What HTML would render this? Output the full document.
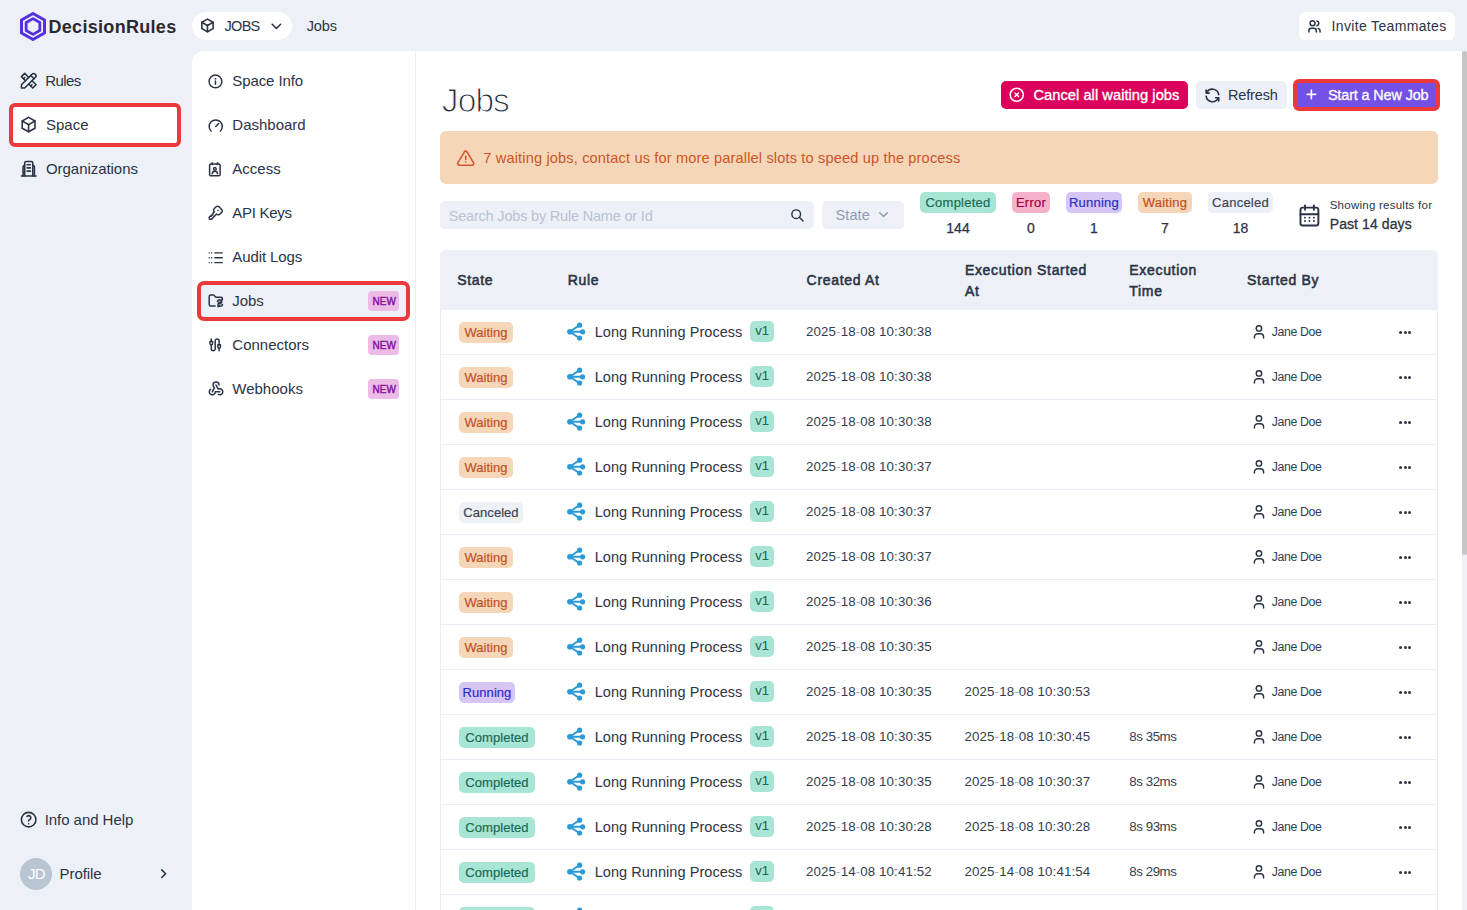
<!DOCTYPE html>
<html><head><meta charset="utf-8"><title>Jobs - DecisionRules</title>
<style>
html,body{margin:0;padding:0}
body{width:1467px;height:910px;overflow:hidden;background:#EDF0F7;position:relative;font-family:"Liberation Sans", sans-serif;-webkit-font-smoothing:antialiased}
.box{position:absolute;box-sizing:border-box}
.t{position:absolute;white-space:nowrap;line-height:1}
svg{overflow:visible}
</style></head><body>
<svg style="position:absolute;left:20px;top:12px" width="26" height="29" viewBox="0 0 26 29"><polygon points="13,1.5 24.5,8 24.5,21 13,27.5 1.5,21 1.5,8" fill="none" stroke="#5530E2" stroke-width="3" stroke-linejoin="round"/><polygon points="13,6.6 19.84,10.55 19.84,18.45 13,22.4 6.16,18.45 6.16,10.55" fill="none" stroke="#5530E2" stroke-width="2.8" stroke-linejoin="round"/></svg>
<div class="t" style="left:48.5px;top:18px;font-size:18px;color:#2A2A2E;font-weight:700;letter-spacing:0.3px;">DecisionRules</div>
<div class="box" style="left:192px;top:12px;width:100px;height:28px;border-radius:14px;background:#fff"></div>
<svg style="position:absolute;left:198.68px;top:17.38px" width="16.93" height="16.93" viewBox="0 0 24 24" fill="none" stroke="#2B3445" stroke-width="2.268" stroke-linecap="round" stroke-linejoin="round"><path d="M12 3l8 4.5l0 9l-8 4.5l-8 -4.5l0 -9l8 -4.5"/><path d="M12 12l8 -4.5"/><path d="M12 12l0 9"/><path d="M12 12l-8 -4.5"/></svg>
<div class="t" style="left:224.5px;top:19px;font-size:14.5px;color:#2B3445;font-weight:400;letter-spacing:-0.7px;">JOBS</div>
<svg style="position:absolute;left:267.60px;top:17.50px" width="16.80" height="16.80" viewBox="0 0 24 24" fill="none" stroke="#2B3445" stroke-width="2.286" stroke-linecap="round" stroke-linejoin="round"><path d="M6 9l6 6l6 -6"/></svg>
<div class="t" style="left:306.7px;top:19px;font-size:14.5px;color:#2B3445;font-weight:400;letter-spacing:-0.1px;">Jobs</div>
<div class="box" style="left:1299px;top:12px;width:156px;height:28px;border-radius:6px;background:#fff"></div>
<svg style="position:absolute;left:1306.78px;top:18.78px" width="14.93" height="14.93" viewBox="0 0 24 24" fill="none" stroke="#2B3445" stroke-width="2.411" stroke-linecap="round" stroke-linejoin="round"><path d="M9 7m-4 0a4 4 0 1 0 8 0a4 4 0 1 0 -8 0"/><path d="M3 21v-2a4 4 0 0 1 4 -4h4a4 4 0 0 1 4 4v2"/><path d="M16 3.13a4 4 0 0 1 0 7.75"/><path d="M21 21v-2a4 4 0 0 0 -3 -3.85"/></svg>
<div class="t" style="left:1331.6px;top:19px;font-size:14px;color:#2B3445;font-weight:400;letter-spacing:0.34px;">Invite Teammates</div>
<div class="box" style="left:9px;top:103px;width:172px;height:44px;border:4px solid #EE393C;border-radius:6px;background:#fff"></div>
<svg style="position:absolute;left:19.07px;top:71.47px" width="19.47" height="19.47" viewBox="0 0 24 24" fill="none" stroke="#2B3445" stroke-width="1.973" stroke-linecap="round" stroke-linejoin="round"><path d="M3 21h4l13 -13a1.5 1.5 0 0 0 -4 -4l-13 13v4"/><path d="M14.5 5.5l4 4"/><path d="M12 8l-5 -5l-4 4l5 5"/><path d="M7 8l-1.5 1.5"/><path d="M16 12l5 5l-4 4l-5 -5"/><path d="M16 17l-1.5 1.5"/></svg>
<div class="t" style="left:45.2px;top:73px;font-size:15px;color:#2B3445;font-weight:400;letter-spacing:-0.6px;">Rules</div>
<svg style="position:absolute;left:19.00px;top:115.30px" width="19.20" height="19.20" viewBox="0 0 24 24" fill="none" stroke="#2B3445" stroke-width="2.000" stroke-linecap="round" stroke-linejoin="round"><path d="M12 3l8 4.5l0 9l-8 4.5l-8 -4.5l0 -9l8 -4.5"/><path d="M12 12l8 -4.5"/><path d="M12 12l0 9"/><path d="M12 12l-8 -4.5"/></svg>
<div class="t" style="left:46px;top:117px;font-size:15px;color:#2B3445;font-weight:400;letter-spacing:0px;">Space</div>
<svg style="position:absolute;left:19.07px;top:159.07px" width="19.47" height="19.47" viewBox="0 0 24 24" fill="none" stroke="#2B3445" stroke-width="1.973" stroke-linecap="round" stroke-linejoin="round"><path d="M5 21v-11a2 2 0 0 1 2 -2h0"/><path d="M19 21v-11a2 2 0 0 0 -2 -2h0"/><path d="M7 21v-16a2 2 0 0 1 2 -2h6a2 2 0 0 1 2 2v16"/><path d="M3 21h18"/><path d="M10 7h4"/><path d="M10 11h4"/><path d="M10 15h4"/></svg>
<div class="t" style="left:46px;top:161px;font-size:15px;color:#2B3445;font-weight:400;letter-spacing:-0.05px;">Organizations</div>
<svg style="position:absolute;left:19.08px;top:809.99px" width="19.33" height="19.33" viewBox="0 0 24 24" fill="none" stroke="#2B3445" stroke-width="1.986" stroke-linecap="round" stroke-linejoin="round"><path d="M12 12m-9 0a9 9 0 1 0 18 0a9 9 0 1 0 -18 0"/><path d="M12 17l0 .01"/><path d="M12 13.5a1.5 1.5 0 0 1 1 -1.5a2.6 2.6 0 1 0 -3 -4"/></svg>
<div class="t" style="left:44.7px;top:812px;font-size:15px;color:#2B3445;font-weight:400;letter-spacing:-0.05px;">Info and Help</div>
<div class="box" style="left:20px;top:858px;width:32px;height:32px;border-radius:50%;background:#B9C5D3"></div>
<div class="t" style="left:28px;top:866px;font-size:15px;color:#fff;font-weight:400;letter-spacing:-0.8px;">JD</div>
<div class="t" style="left:59.6px;top:866px;font-size:15px;color:#2B3445;font-weight:400;letter-spacing:-0.1px;">Profile</div>
<svg style="position:absolute;left:155.93px;top:866.45px" width="15.40" height="15.40" viewBox="0 0 24 24" fill="none" stroke="#2B3445" stroke-width="2.494" stroke-linecap="round" stroke-linejoin="round"><path d="M9 6l6 6l-6 6"/></svg>
<div class="box" style="left:192px;top:51px;width:224px;height:859px;background:#fff;border-top-left-radius:12px;border-right:1px solid #ECEFF6"></div>
<div class="box" style="left:197px;top:280.5px;width:213px;height:40px;border:4px solid #EE393C;border-radius:7px;background:#EDF0F7"></div>
<svg style="position:absolute;left:207.03px;top:72.63px" width="16.93" height="16.93" viewBox="0 0 24 24" fill="none" stroke="#2B3445" stroke-width="2.126" stroke-linecap="round" stroke-linejoin="round"><path d="M3 12a9 9 0 1 0 18 0a9 9 0 0 0 -18 0"/><path d="M11.6 8.2h.8"/><path d="M12 11.5v4.5"/></svg>
<div class="t" style="left:232.3px;top:73px;font-size:15px;color:#2B3445;font-weight:400;letter-spacing:-0.1px;">Space Info</div>
<svg style="position:absolute;left:206.97px;top:117.34px" width="17.47" height="17.47" viewBox="0 0 24 24" fill="none" stroke="#2B3445" stroke-width="2.061" stroke-linecap="round" stroke-linejoin="round"><path d="M5.636 19.364a9 9 0 1 1 12.728 0"/><path d="M16 9l-4 4"/></svg>
<div class="t" style="left:232.3px;top:117px;font-size:15px;color:#2B3445;font-weight:400;letter-spacing:0px;">Dashboard</div>
<svg style="position:absolute;left:206.53px;top:161.79px" width="15.72" height="15.72" viewBox="0 0 24 24" fill="none" stroke="#2B3445" stroke-width="2.290" stroke-linecap="round" stroke-linejoin="round"><path d="M4 5a2 2 0 0 1 2 -2h12a2 2 0 0 1 2 2v14a2 2 0 0 1 -2 2h-12a2 2 0 0 1 -2 -2z"/><path d="M8 1v3"/><path d="M16 1v3"/><path d="M12 10.5m-2 0a2 2 0 1 0 4 0a2 2 0 1 0 -4 0"/><path d="M8 18a4 4 0 0 1 8 0"/></svg>
<div class="t" style="left:232.3px;top:161px;font-size:15px;color:#2B3445;font-weight:400;letter-spacing:0px;">Access</div>
<svg style="position:absolute;left:206.97px;top:204.07px" width="17.47" height="17.47" viewBox="0 0 24 24" fill="none" stroke="#2B3445" stroke-width="2.061" stroke-linecap="round" stroke-linejoin="round"><path d="M16.555 3.843l3.602 3.602a2.877 2.877 0 0 1 0 4.069l-2.643 2.643a2.877 2.877 0 0 1 -4.069 0l-.301 -.301l-6.558 6.558a2 2 0 0 1 -1.239 .578l-.175 .008h-1.172a1 1 0 0 1 -.993 -.883l-.007 -.117v-1.172a2 2 0 0 1 .467 -1.284l.119 -.13l.414 -.414h2v-2h2v-2l2.144 -2.144l-.301 -.301a2.877 2.877 0 0 1 0 -4.069l2.643 -2.643a2.877 2.877 0 0 1 4.069 0z"/><path d="M15 9h.01"/></svg>
<div class="t" style="left:232.3px;top:205px;font-size:15px;color:#2B3445;font-weight:400;letter-spacing:-0.3px;">API Keys</div>
<svg style="position:absolute;left:206.00px;top:247.57px" width="19.50" height="19.50" viewBox="0 0 24 24" fill="none" stroke="#2B3445" stroke-width="1.846" stroke-linecap="round" stroke-linejoin="round"><path d="M11 6h9"/><path d="M11 12h9"/><path d="M11 18h9"/><path d="M4 6h.01"/><path d="M7 6h.01"/><path d="M4 12h.01"/><path d="M7 12h.01"/><path d="M4 18h.01"/><path d="M7 18h.01"/></svg>
<div class="t" style="left:232.3px;top:249px;font-size:15px;color:#2B3445;font-weight:400;letter-spacing:-0.1px;">Audit Logs</div>
<svg style="position:absolute;left:207.04px;top:292.10px" width="17.70" height="17.70" viewBox="0 0 24 24" fill="none" stroke="#2B3445" stroke-width="2.034" stroke-linecap="round" stroke-linejoin="round"><path d="M11 19h-6a2 2 0 0 1 -2 -2v-11a2 2 0 0 1 2 -2h4l3 3h7a2 2 0 0 1 2 2v1"/><path d="M14 13a3 3 0 0 1 5 -1.5l1 -1.5v4h-4"/><path d="M21 17a3 3 0 0 1 -5 1.5l-1 1.5v-4h4"/></svg>
<div class="t" style="left:232.3px;top:293px;font-size:15px;color:#2B3445;font-weight:400;letter-spacing:-0.1px;">Jobs</div>
<svg style="position:absolute;left:207.58px;top:336.98px" width="15.73" height="15.73" viewBox="0 0 24 24" fill="none" stroke="#2B3445" stroke-width="2.288" stroke-linecap="round" stroke-linejoin="round"><path d="M5 3v4"/><path d="M3 7h4v3a2 2 0 0 1 -4 0z"/><path d="M5 12v6a3 3 0 0 0 3 3h0a3 3 0 0 0 3 -3v-12a3 3 0 0 1 3 -3h0a3 3 0 0 1 3 3v6"/><path d="M15 12h4v3a2 2 0 0 1 -4 0z"/><path d="M17 17v4"/></svg>
<div class="t" style="left:232.3px;top:337px;font-size:15px;color:#2B3445;font-weight:400;letter-spacing:0px;">Connectors</div>
<svg style="position:absolute;left:207.29px;top:379.34px" width="18.07" height="18.07" viewBox="0 0 24 24" fill="none" stroke="#2B3445" stroke-width="1.992" stroke-linecap="round" stroke-linejoin="round"><path d="M4.876 13.61a4 4 0 1 0 6.124 3.39h6"/><path d="M15.066 20.502a4 4 0 1 0 1.934 -7.502c-.706 0 -1.424 .179 -2 .5l-3 -5.5"/><path d="M16 8a4 4 0 1 0 -8 0c0 1.506 .77 2.818 2 3.5l-3 5.5"/></svg>
<div class="t" style="left:232.3px;top:381px;font-size:15px;color:#2B3445;font-weight:400;letter-spacing:0px;">Webhooks</div>
<div class="box" style="left:368px;top:291px;width:31px;height:20px;border-radius:4px;background:#ECBBE6"></div>
<div class="t" style="left:372.6px;top:297px;font-size:10px;color:#80109E;font-weight:400;letter-spacing:0.05px;-webkit-text-stroke:0.4px #80109E">NEW</div>
<div class="box" style="left:368px;top:335px;width:31px;height:20px;border-radius:4px;background:#ECBBE6"></div>
<div class="t" style="left:372.6px;top:341px;font-size:10px;color:#80109E;font-weight:400;letter-spacing:0.05px;-webkit-text-stroke:0.4px #80109E">NEW</div>
<div class="box" style="left:368px;top:379px;width:31px;height:20px;border-radius:4px;background:#ECBBE6"></div>
<div class="t" style="left:372.6px;top:385px;font-size:10px;color:#80109E;font-weight:400;letter-spacing:0.05px;-webkit-text-stroke:0.4px #80109E">NEW</div>
<div class="box" style="left:416px;top:51px;width:1046px;height:859px;background:#fff"></div>
<div class="box" style="left:1462px;top:51px;width:5px;height:504px;background:#C6C6C6;border-radius:3px"></div>
<div class="t" style="left:441.8px;top:84px;font-size:33.5px;color:#1F2A3C;font-weight:400;letter-spacing:-0.9px;-webkit-text-stroke:1.1px #fff">Jobs</div>
<div class="box" style="left:1001px;top:81px;width:187px;height:28px;border-radius:5px;background:#DA005C"></div>
<svg style="position:absolute;left:1008.37px;top:85.77px" width="17.47" height="17.47" viewBox="0 0 24 24" fill="none" stroke="#fff" stroke-width="2.061" stroke-linecap="round" stroke-linejoin="round"><path d="M3 12a9 9 0 1 0 18 0a9 9 0 1 0 -18 0"/><path d="M9.6 9.6l4.8 4.8m0 -4.8l-4.8 4.8"/></svg>
<div class="t" style="left:1033.4px;top:88px;font-size:14.7px;color:#fff;font-weight:400;letter-spacing:0.03px;-webkit-text-stroke:0.35px #fff">Cancel all waiting jobs</div>
<div class="box" style="left:1196px;top:81px;width:91px;height:28px;border-radius:5px;background:#EDF0F7"></div>
<svg style="position:absolute;left:1202.65px;top:86.24px" width="18.90" height="18.90" viewBox="0 0 24 24" fill="none" stroke="#2B3445" stroke-width="2.032" stroke-linecap="round" stroke-linejoin="round"><path d="M20 11a8.1 8.1 0 0 0 -15.5 -2m-.5 -4v4h4"/><path d="M4 13a8.1 8.1 0 0 0 15.5 2m.5 4v-4h-4"/></svg>
<div class="t" style="left:1228px;top:88px;font-size:14.5px;color:#2B3445;font-weight:400;letter-spacing:-0.15px;">Refresh</div>
<div class="box" style="left:1293px;top:79px;width:147px;height:32px;border:4px solid #EE393C;border-radius:6px;background:#7350E6"></div>
<svg style="position:absolute;left:1303.73px;top:87.23px" width="14.74" height="14.74" viewBox="0 0 24 24" fill="none" stroke="#fff" stroke-width="2.605" stroke-linecap="round" stroke-linejoin="round"><path d="M12 5l0 14"/><path d="M5 12l14 0"/></svg>
<div class="t" style="left:1327.9px;top:88px;font-size:14.4px;color:#fff;font-weight:400;letter-spacing:-0.12px;-webkit-text-stroke:0.3px #fff">Start a New Job</div>
<div class="box" style="left:440px;top:131px;width:998px;height:53px;border-radius:6px;background:#F5D6B9"></div>
<svg style="position:absolute;left:455.78px;top:148.64px" width="19.44" height="19.44" viewBox="0 0 24 24" fill="none" stroke="#D25A2A" stroke-width="1.975" stroke-linecap="round" stroke-linejoin="round"><path d="M12 9v4"/><path d="M10.363 3.591l-8.106 13.534a1.914 1.914 0 0 0 1.636 2.871h16.214a1.914 1.914 0 0 0 1.636 -2.87l-8.106 -13.536a1.914 1.914 0 0 0 -3.274 0z"/><path d="M12 16h.01"/></svg>
<div class="t" style="left:483.3px;top:151px;font-size:14.6px;color:#CC5526;font-weight:400;letter-spacing:0.145px;">7 waiting jobs, contact us for more parallel slots to speed up the process</div>
<div class="box" style="left:440px;top:201px;width:374px;height:28px;border-radius:5px;background:#EDF0F7"></div>
<div class="t" style="left:448.7px;top:209px;font-size:14.5px;color:#B8C3D3;font-weight:400;letter-spacing:-0.19px;">Search Jobs by Rule Name or Id</div>
<svg style="position:absolute;left:789.97px;top:207.87px" width="14.87" height="14.87" viewBox="0 0 24 24" fill="none" stroke="#2B3445" stroke-width="2.341" stroke-linecap="round" stroke-linejoin="round"><path d="M10 10m-7 0a7 7 0 1 0 14 0a7 7 0 1 0 -14 0"/><path d="M21 21l-6 -6"/></svg>
<div class="box" style="left:822px;top:201px;width:82px;height:28px;border-radius:5px;background:#EDF0F7"></div>
<div class="t" style="left:835.4px;top:208px;font-size:14.5px;color:#8D9BB0;font-weight:400;letter-spacing:0.15px;">State</div>
<svg style="position:absolute;left:875.65px;top:207.05px" width="15.20" height="15.20" viewBox="0 0 24 24" fill="none" stroke="#8D9BB0" stroke-width="2.368" stroke-linecap="round" stroke-linejoin="round"><path d="M6 9l6 6l6 -6"/></svg>
<div class="box" style="left:920px;top:192px;width:76px;height:21px;border-radius:5px;background:#A9E5D5"></div>
<div class="t" style="left:920px;top:195.5px;width:76px;text-align:center;font-size:13px;color:#1B6A52;letter-spacing:0.25px;-webkit-text-stroke:0.2px #1B6A52">Completed</div>
<div class="t" style="left:920px;top:221px;width:76px;text-align:center;font-size:14px;color:#2B3445;-webkit-text-stroke:0.25px #2B3445">144</div>
<div class="box" style="left:1012px;top:192px;width:38px;height:21px;border-radius:5px;background:#F5B1C9"></div>
<div class="t" style="left:1012px;top:195.5px;width:38px;text-align:center;font-size:13px;color:#A3003D;letter-spacing:0.25px;-webkit-text-stroke:0.2px #A3003D">Error</div>
<div class="t" style="left:1012px;top:221px;width:38px;text-align:center;font-size:14px;color:#2B3445;-webkit-text-stroke:0.25px #2B3445">0</div>
<div class="box" style="left:1066px;top:192px;width:56px;height:21px;border-radius:5px;background:#D5C6F5"></div>
<div class="t" style="left:1066px;top:195.5px;width:56px;text-align:center;font-size:13px;color:#2B2FCB;letter-spacing:0.25px;-webkit-text-stroke:0.2px #2B2FCB">Running</div>
<div class="t" style="left:1066px;top:221px;width:56px;text-align:center;font-size:14px;color:#2B3445;-webkit-text-stroke:0.25px #2B3445">1</div>
<div class="box" style="left:1138px;top:192px;width:54px;height:21px;border-radius:5px;background:#F5D6B9"></div>
<div class="t" style="left:1138px;top:195.5px;width:54px;text-align:center;font-size:13px;color:#C4511D;letter-spacing:0.25px;-webkit-text-stroke:0.2px #C4511D">Waiting</div>
<div class="t" style="left:1138px;top:221px;width:54px;text-align:center;font-size:14px;color:#2B3445;-webkit-text-stroke:0.25px #2B3445">7</div>
<div class="box" style="left:1208px;top:192px;width:65px;height:21px;border-radius:5px;background:#EDF0F7"></div>
<div class="t" style="left:1208px;top:195.5px;width:65px;text-align:center;font-size:13px;color:#3A4556;letter-spacing:0.25px;-webkit-text-stroke:0.2px #3A4556">Canceled</div>
<div class="t" style="left:1208px;top:221px;width:65px;text-align:center;font-size:14px;color:#2B3445;-webkit-text-stroke:0.25px #2B3445">18</div>
<svg style="position:absolute;left:1295.57px;top:201.69px" width="26.85" height="26.85" viewBox="0 0 24 24" fill="none" stroke="#2B3445" stroke-width="1.698" stroke-linecap="round" stroke-linejoin="round"><path d="M4 7a2 2 0 0 1 2 -2h12a2 2 0 0 1 2 2v12a2 2 0 0 1 -2 2h-12a2 2 0 0 1 -2 -2v-12z"/><path d="M16 3v4"/><path d="M8 3v4"/><path d="M4 11h16"/><path d="M8 14h.01"/><path d="M12 14h.01"/><path d="M16 14h.01"/><path d="M8 17h.01"/><path d="M12 17h.01"/><path d="M16 17h.01"/></svg>
<div class="t" style="left:1329.7px;top:200px;font-size:11.5px;color:#2B3445;font-weight:400;letter-spacing:0.25px;">Showing results for</div>
<div class="t" style="left:1329.7px;top:217px;font-size:14px;color:#2B3445;font-weight:400;letter-spacing:0.1px;-webkit-text-stroke:0.3px #2B3445">Past 14 days</div>
<div class="box" style="left:440px;top:250px;width:998px;height:60px;border-radius:6px 6px 0 0;background:#EDF0F7"></div>
<div class="box" style="left:440px;top:310px;width:998px;height:600px;border-left:1px solid #E9EDF5;border-right:1px solid #E9EDF5"></div>
<div class="t" style="left:457.2px;top:273px;font-size:14px;color:#2B3445;font-weight:400;letter-spacing:0.68px;-webkit-text-stroke:0.55px #2B3445">State</div>
<div class="t" style="left:567.7px;top:273px;font-size:14px;color:#2B3445;font-weight:400;letter-spacing:0.68px;-webkit-text-stroke:0.55px #2B3445">Rule</div>
<div class="t" style="left:806.6px;top:273px;font-size:14px;color:#2B3445;font-weight:400;letter-spacing:0.68px;-webkit-text-stroke:0.55px #2B3445">Created At</div>
<div class="t" style="left:964.9px;top:263px;font-size:14px;color:#2B3445;font-weight:400;letter-spacing:0.68px;-webkit-text-stroke:0.55px #2B3445">Execution Started</div>
<div class="t" style="left:964.9px;top:284px;font-size:14px;color:#2B3445;font-weight:400;letter-spacing:0.68px;-webkit-text-stroke:0.55px #2B3445">At</div>
<div class="t" style="left:1129.3px;top:263px;font-size:14px;color:#2B3445;font-weight:400;letter-spacing:0.68px;-webkit-text-stroke:0.55px #2B3445">Execution</div>
<div class="t" style="left:1129.3px;top:284px;font-size:14px;color:#2B3445;font-weight:400;letter-spacing:0.68px;-webkit-text-stroke:0.55px #2B3445">Time</div>
<div class="t" style="left:1247.1px;top:273px;font-size:14px;color:#2B3445;font-weight:400;letter-spacing:0.68px;-webkit-text-stroke:0.55px #2B3445">Started By</div>
<div class="box" style="left:440px;top:354px;width:998px;height:1px;background:#E9EDF5"></div>
<div class="box" style="left:459px;top:322px;width:54px;height:21px;border-radius:5px;background:#F5D6B9"></div>
<div class="t" style="left:459px;top:325.5px;width:54px;text-align:center;font-size:13px;color:#C4511D;letter-spacing:0.05px;-webkit-text-stroke:0.2px #C4511D">Waiting</div>
<svg style="position:absolute;left:567px;top:321.5px" width="19" height="19" viewBox="0 0 19 19"><g stroke="#2C9AD6" stroke-width="1.9" fill="none" stroke-linecap="round"><path d="M2.8 9.8L12.5 3.1"/><path d="M2.8 9.8H15.7"/><path d="M2.8 9.8L12.5 16.1"/></g><g fill="#2C9AD6"><circle cx="2.9" cy="9.8" r="2.8"/><circle cx="12.6" cy="3.2" r="2.6"/><circle cx="15.6" cy="9.8" r="2.6"/><circle cx="12.6" cy="16.0" r="2.6"/></g></svg>
<div class="t" style="left:594.7px;top:325px;font-size:14.5px;color:#2B3445;font-weight:400;letter-spacing:0.05px;">Long Running Process</div>
<div class="box" style="left:750px;top:321px;width:24px;height:21px;border-radius:5px;background:#A9E5D5"></div>
<div class="t" style="left:750px;top:323.8px;width:24px;text-align:center;font-size:13px;color:#1B6A52;letter-spacing:0px;-webkit-text-stroke:0.1px #1B6A52">v1</div>
<div class="t" style="left:806px;top:325px;font-size:13.3px;color:#333D4E;font-weight:400;letter-spacing:0.12px;">2025<span style="color:#A3ABB8">-</span>18<span style="color:#A3ABB8">-</span>08 10:30:38</div>
<svg style="position:absolute;left:1250px;top:322px" width="18" height="18" viewBox="0 0 18 18" fill="none" stroke="#2B3445" stroke-width="1.45" stroke-linecap="round"><circle cx="8.95" cy="6.4" r="2.7"/><path d="M4.4 16.1v-1.1a3.2 3.2 0 0 1 3.2 -3.2h2.8a3.2 3.2 0 0 1 3.2 3.2v1.1"/></svg>
<div class="t" style="left:1271.7px;top:326px;font-size:12.3px;color:#333D4E;font-weight:400;letter-spacing:-0.35px;">Jane Doe</div>
<div class="box" style="left:1398.8px;top:330.8px;width:3px;height:3px;border-radius:50%;background:#2B3445"></div>
<div class="box" style="left:1403.5px;top:330.8px;width:3px;height:3px;border-radius:50%;background:#2B3445"></div>
<div class="box" style="left:1408.2px;top:330.8px;width:3px;height:3px;border-radius:50%;background:#2B3445"></div>
<div class="box" style="left:440px;top:399px;width:998px;height:1px;background:#E9EDF5"></div>
<div class="box" style="left:459px;top:367px;width:54px;height:21px;border-radius:5px;background:#F5D6B9"></div>
<div class="t" style="left:459px;top:370.5px;width:54px;text-align:center;font-size:13px;color:#C4511D;letter-spacing:0.05px;-webkit-text-stroke:0.2px #C4511D">Waiting</div>
<svg style="position:absolute;left:567px;top:366.5px" width="19" height="19" viewBox="0 0 19 19"><g stroke="#2C9AD6" stroke-width="1.9" fill="none" stroke-linecap="round"><path d="M2.8 9.8L12.5 3.1"/><path d="M2.8 9.8H15.7"/><path d="M2.8 9.8L12.5 16.1"/></g><g fill="#2C9AD6"><circle cx="2.9" cy="9.8" r="2.8"/><circle cx="12.6" cy="3.2" r="2.6"/><circle cx="15.6" cy="9.8" r="2.6"/><circle cx="12.6" cy="16.0" r="2.6"/></g></svg>
<div class="t" style="left:594.7px;top:370px;font-size:14.5px;color:#2B3445;font-weight:400;letter-spacing:0.05px;">Long Running Process</div>
<div class="box" style="left:750px;top:366px;width:24px;height:21px;border-radius:5px;background:#A9E5D5"></div>
<div class="t" style="left:750px;top:368.8px;width:24px;text-align:center;font-size:13px;color:#1B6A52;letter-spacing:0px;-webkit-text-stroke:0.1px #1B6A52">v1</div>
<div class="t" style="left:806px;top:370px;font-size:13.3px;color:#333D4E;font-weight:400;letter-spacing:0.12px;">2025<span style="color:#A3ABB8">-</span>18<span style="color:#A3ABB8">-</span>08 10:30:38</div>
<svg style="position:absolute;left:1250px;top:367px" width="18" height="18" viewBox="0 0 18 18" fill="none" stroke="#2B3445" stroke-width="1.45" stroke-linecap="round"><circle cx="8.95" cy="6.4" r="2.7"/><path d="M4.4 16.1v-1.1a3.2 3.2 0 0 1 3.2 -3.2h2.8a3.2 3.2 0 0 1 3.2 3.2v1.1"/></svg>
<div class="t" style="left:1271.7px;top:371px;font-size:12.3px;color:#333D4E;font-weight:400;letter-spacing:-0.35px;">Jane Doe</div>
<div class="box" style="left:1398.8px;top:375.8px;width:3px;height:3px;border-radius:50%;background:#2B3445"></div>
<div class="box" style="left:1403.5px;top:375.8px;width:3px;height:3px;border-radius:50%;background:#2B3445"></div>
<div class="box" style="left:1408.2px;top:375.8px;width:3px;height:3px;border-radius:50%;background:#2B3445"></div>
<div class="box" style="left:440px;top:444px;width:998px;height:1px;background:#E9EDF5"></div>
<div class="box" style="left:459px;top:412px;width:54px;height:21px;border-radius:5px;background:#F5D6B9"></div>
<div class="t" style="left:459px;top:415.5px;width:54px;text-align:center;font-size:13px;color:#C4511D;letter-spacing:0.05px;-webkit-text-stroke:0.2px #C4511D">Waiting</div>
<svg style="position:absolute;left:567px;top:411.5px" width="19" height="19" viewBox="0 0 19 19"><g stroke="#2C9AD6" stroke-width="1.9" fill="none" stroke-linecap="round"><path d="M2.8 9.8L12.5 3.1"/><path d="M2.8 9.8H15.7"/><path d="M2.8 9.8L12.5 16.1"/></g><g fill="#2C9AD6"><circle cx="2.9" cy="9.8" r="2.8"/><circle cx="12.6" cy="3.2" r="2.6"/><circle cx="15.6" cy="9.8" r="2.6"/><circle cx="12.6" cy="16.0" r="2.6"/></g></svg>
<div class="t" style="left:594.7px;top:415px;font-size:14.5px;color:#2B3445;font-weight:400;letter-spacing:0.05px;">Long Running Process</div>
<div class="box" style="left:750px;top:411px;width:24px;height:21px;border-radius:5px;background:#A9E5D5"></div>
<div class="t" style="left:750px;top:413.8px;width:24px;text-align:center;font-size:13px;color:#1B6A52;letter-spacing:0px;-webkit-text-stroke:0.1px #1B6A52">v1</div>
<div class="t" style="left:806px;top:415px;font-size:13.3px;color:#333D4E;font-weight:400;letter-spacing:0.12px;">2025<span style="color:#A3ABB8">-</span>18<span style="color:#A3ABB8">-</span>08 10:30:38</div>
<svg style="position:absolute;left:1250px;top:412px" width="18" height="18" viewBox="0 0 18 18" fill="none" stroke="#2B3445" stroke-width="1.45" stroke-linecap="round"><circle cx="8.95" cy="6.4" r="2.7"/><path d="M4.4 16.1v-1.1a3.2 3.2 0 0 1 3.2 -3.2h2.8a3.2 3.2 0 0 1 3.2 3.2v1.1"/></svg>
<div class="t" style="left:1271.7px;top:416px;font-size:12.3px;color:#333D4E;font-weight:400;letter-spacing:-0.35px;">Jane Doe</div>
<div class="box" style="left:1398.8px;top:420.8px;width:3px;height:3px;border-radius:50%;background:#2B3445"></div>
<div class="box" style="left:1403.5px;top:420.8px;width:3px;height:3px;border-radius:50%;background:#2B3445"></div>
<div class="box" style="left:1408.2px;top:420.8px;width:3px;height:3px;border-radius:50%;background:#2B3445"></div>
<div class="box" style="left:440px;top:489px;width:998px;height:1px;background:#E9EDF5"></div>
<div class="box" style="left:459px;top:457px;width:54px;height:21px;border-radius:5px;background:#F5D6B9"></div>
<div class="t" style="left:459px;top:460.5px;width:54px;text-align:center;font-size:13px;color:#C4511D;letter-spacing:0.05px;-webkit-text-stroke:0.2px #C4511D">Waiting</div>
<svg style="position:absolute;left:567px;top:456.5px" width="19" height="19" viewBox="0 0 19 19"><g stroke="#2C9AD6" stroke-width="1.9" fill="none" stroke-linecap="round"><path d="M2.8 9.8L12.5 3.1"/><path d="M2.8 9.8H15.7"/><path d="M2.8 9.8L12.5 16.1"/></g><g fill="#2C9AD6"><circle cx="2.9" cy="9.8" r="2.8"/><circle cx="12.6" cy="3.2" r="2.6"/><circle cx="15.6" cy="9.8" r="2.6"/><circle cx="12.6" cy="16.0" r="2.6"/></g></svg>
<div class="t" style="left:594.7px;top:460px;font-size:14.5px;color:#2B3445;font-weight:400;letter-spacing:0.05px;">Long Running Process</div>
<div class="box" style="left:750px;top:456px;width:24px;height:21px;border-radius:5px;background:#A9E5D5"></div>
<div class="t" style="left:750px;top:458.8px;width:24px;text-align:center;font-size:13px;color:#1B6A52;letter-spacing:0px;-webkit-text-stroke:0.1px #1B6A52">v1</div>
<div class="t" style="left:806px;top:460px;font-size:13.3px;color:#333D4E;font-weight:400;letter-spacing:0.12px;">2025<span style="color:#A3ABB8">-</span>18<span style="color:#A3ABB8">-</span>08 10:30:37</div>
<svg style="position:absolute;left:1250px;top:457px" width="18" height="18" viewBox="0 0 18 18" fill="none" stroke="#2B3445" stroke-width="1.45" stroke-linecap="round"><circle cx="8.95" cy="6.4" r="2.7"/><path d="M4.4 16.1v-1.1a3.2 3.2 0 0 1 3.2 -3.2h2.8a3.2 3.2 0 0 1 3.2 3.2v1.1"/></svg>
<div class="t" style="left:1271.7px;top:461px;font-size:12.3px;color:#333D4E;font-weight:400;letter-spacing:-0.35px;">Jane Doe</div>
<div class="box" style="left:1398.8px;top:465.8px;width:3px;height:3px;border-radius:50%;background:#2B3445"></div>
<div class="box" style="left:1403.5px;top:465.8px;width:3px;height:3px;border-radius:50%;background:#2B3445"></div>
<div class="box" style="left:1408.2px;top:465.8px;width:3px;height:3px;border-radius:50%;background:#2B3445"></div>
<div class="box" style="left:440px;top:534px;width:998px;height:1px;background:#E9EDF5"></div>
<div class="box" style="left:459px;top:502px;width:64px;height:21px;border-radius:5px;background:#EDF0F7"></div>
<div class="t" style="left:459px;top:505.5px;width:64px;text-align:center;font-size:13px;color:#3A4556;letter-spacing:0.05px;-webkit-text-stroke:0.2px #3A4556">Canceled</div>
<svg style="position:absolute;left:567px;top:501.5px" width="19" height="19" viewBox="0 0 19 19"><g stroke="#2C9AD6" stroke-width="1.9" fill="none" stroke-linecap="round"><path d="M2.8 9.8L12.5 3.1"/><path d="M2.8 9.8H15.7"/><path d="M2.8 9.8L12.5 16.1"/></g><g fill="#2C9AD6"><circle cx="2.9" cy="9.8" r="2.8"/><circle cx="12.6" cy="3.2" r="2.6"/><circle cx="15.6" cy="9.8" r="2.6"/><circle cx="12.6" cy="16.0" r="2.6"/></g></svg>
<div class="t" style="left:594.7px;top:505px;font-size:14.5px;color:#2B3445;font-weight:400;letter-spacing:0.05px;">Long Running Process</div>
<div class="box" style="left:750px;top:501px;width:24px;height:21px;border-radius:5px;background:#A9E5D5"></div>
<div class="t" style="left:750px;top:503.8px;width:24px;text-align:center;font-size:13px;color:#1B6A52;letter-spacing:0px;-webkit-text-stroke:0.1px #1B6A52">v1</div>
<div class="t" style="left:806px;top:505px;font-size:13.3px;color:#333D4E;font-weight:400;letter-spacing:0.12px;">2025<span style="color:#A3ABB8">-</span>18<span style="color:#A3ABB8">-</span>08 10:30:37</div>
<svg style="position:absolute;left:1250px;top:502px" width="18" height="18" viewBox="0 0 18 18" fill="none" stroke="#2B3445" stroke-width="1.45" stroke-linecap="round"><circle cx="8.95" cy="6.4" r="2.7"/><path d="M4.4 16.1v-1.1a3.2 3.2 0 0 1 3.2 -3.2h2.8a3.2 3.2 0 0 1 3.2 3.2v1.1"/></svg>
<div class="t" style="left:1271.7px;top:506px;font-size:12.3px;color:#333D4E;font-weight:400;letter-spacing:-0.35px;">Jane Doe</div>
<div class="box" style="left:1398.8px;top:510.8px;width:3px;height:3px;border-radius:50%;background:#2B3445"></div>
<div class="box" style="left:1403.5px;top:510.8px;width:3px;height:3px;border-radius:50%;background:#2B3445"></div>
<div class="box" style="left:1408.2px;top:510.8px;width:3px;height:3px;border-radius:50%;background:#2B3445"></div>
<div class="box" style="left:440px;top:579px;width:998px;height:1px;background:#E9EDF5"></div>
<div class="box" style="left:459px;top:547px;width:54px;height:21px;border-radius:5px;background:#F5D6B9"></div>
<div class="t" style="left:459px;top:550.5px;width:54px;text-align:center;font-size:13px;color:#C4511D;letter-spacing:0.05px;-webkit-text-stroke:0.2px #C4511D">Waiting</div>
<svg style="position:absolute;left:567px;top:546.5px" width="19" height="19" viewBox="0 0 19 19"><g stroke="#2C9AD6" stroke-width="1.9" fill="none" stroke-linecap="round"><path d="M2.8 9.8L12.5 3.1"/><path d="M2.8 9.8H15.7"/><path d="M2.8 9.8L12.5 16.1"/></g><g fill="#2C9AD6"><circle cx="2.9" cy="9.8" r="2.8"/><circle cx="12.6" cy="3.2" r="2.6"/><circle cx="15.6" cy="9.8" r="2.6"/><circle cx="12.6" cy="16.0" r="2.6"/></g></svg>
<div class="t" style="left:594.7px;top:550px;font-size:14.5px;color:#2B3445;font-weight:400;letter-spacing:0.05px;">Long Running Process</div>
<div class="box" style="left:750px;top:546px;width:24px;height:21px;border-radius:5px;background:#A9E5D5"></div>
<div class="t" style="left:750px;top:548.8px;width:24px;text-align:center;font-size:13px;color:#1B6A52;letter-spacing:0px;-webkit-text-stroke:0.1px #1B6A52">v1</div>
<div class="t" style="left:806px;top:550px;font-size:13.3px;color:#333D4E;font-weight:400;letter-spacing:0.12px;">2025<span style="color:#A3ABB8">-</span>18<span style="color:#A3ABB8">-</span>08 10:30:37</div>
<svg style="position:absolute;left:1250px;top:547px" width="18" height="18" viewBox="0 0 18 18" fill="none" stroke="#2B3445" stroke-width="1.45" stroke-linecap="round"><circle cx="8.95" cy="6.4" r="2.7"/><path d="M4.4 16.1v-1.1a3.2 3.2 0 0 1 3.2 -3.2h2.8a3.2 3.2 0 0 1 3.2 3.2v1.1"/></svg>
<div class="t" style="left:1271.7px;top:551px;font-size:12.3px;color:#333D4E;font-weight:400;letter-spacing:-0.35px;">Jane Doe</div>
<div class="box" style="left:1398.8px;top:555.8px;width:3px;height:3px;border-radius:50%;background:#2B3445"></div>
<div class="box" style="left:1403.5px;top:555.8px;width:3px;height:3px;border-radius:50%;background:#2B3445"></div>
<div class="box" style="left:1408.2px;top:555.8px;width:3px;height:3px;border-radius:50%;background:#2B3445"></div>
<div class="box" style="left:440px;top:624px;width:998px;height:1px;background:#E9EDF5"></div>
<div class="box" style="left:459px;top:592px;width:54px;height:21px;border-radius:5px;background:#F5D6B9"></div>
<div class="t" style="left:459px;top:595.5px;width:54px;text-align:center;font-size:13px;color:#C4511D;letter-spacing:0.05px;-webkit-text-stroke:0.2px #C4511D">Waiting</div>
<svg style="position:absolute;left:567px;top:591.5px" width="19" height="19" viewBox="0 0 19 19"><g stroke="#2C9AD6" stroke-width="1.9" fill="none" stroke-linecap="round"><path d="M2.8 9.8L12.5 3.1"/><path d="M2.8 9.8H15.7"/><path d="M2.8 9.8L12.5 16.1"/></g><g fill="#2C9AD6"><circle cx="2.9" cy="9.8" r="2.8"/><circle cx="12.6" cy="3.2" r="2.6"/><circle cx="15.6" cy="9.8" r="2.6"/><circle cx="12.6" cy="16.0" r="2.6"/></g></svg>
<div class="t" style="left:594.7px;top:595px;font-size:14.5px;color:#2B3445;font-weight:400;letter-spacing:0.05px;">Long Running Process</div>
<div class="box" style="left:750px;top:591px;width:24px;height:21px;border-radius:5px;background:#A9E5D5"></div>
<div class="t" style="left:750px;top:593.8px;width:24px;text-align:center;font-size:13px;color:#1B6A52;letter-spacing:0px;-webkit-text-stroke:0.1px #1B6A52">v1</div>
<div class="t" style="left:806px;top:595px;font-size:13.3px;color:#333D4E;font-weight:400;letter-spacing:0.12px;">2025<span style="color:#A3ABB8">-</span>18<span style="color:#A3ABB8">-</span>08 10:30:36</div>
<svg style="position:absolute;left:1250px;top:592px" width="18" height="18" viewBox="0 0 18 18" fill="none" stroke="#2B3445" stroke-width="1.45" stroke-linecap="round"><circle cx="8.95" cy="6.4" r="2.7"/><path d="M4.4 16.1v-1.1a3.2 3.2 0 0 1 3.2 -3.2h2.8a3.2 3.2 0 0 1 3.2 3.2v1.1"/></svg>
<div class="t" style="left:1271.7px;top:596px;font-size:12.3px;color:#333D4E;font-weight:400;letter-spacing:-0.35px;">Jane Doe</div>
<div class="box" style="left:1398.8px;top:600.8px;width:3px;height:3px;border-radius:50%;background:#2B3445"></div>
<div class="box" style="left:1403.5px;top:600.8px;width:3px;height:3px;border-radius:50%;background:#2B3445"></div>
<div class="box" style="left:1408.2px;top:600.8px;width:3px;height:3px;border-radius:50%;background:#2B3445"></div>
<div class="box" style="left:440px;top:669px;width:998px;height:1px;background:#E9EDF5"></div>
<div class="box" style="left:459px;top:637px;width:54px;height:21px;border-radius:5px;background:#F5D6B9"></div>
<div class="t" style="left:459px;top:640.5px;width:54px;text-align:center;font-size:13px;color:#C4511D;letter-spacing:0.05px;-webkit-text-stroke:0.2px #C4511D">Waiting</div>
<svg style="position:absolute;left:567px;top:636.5px" width="19" height="19" viewBox="0 0 19 19"><g stroke="#2C9AD6" stroke-width="1.9" fill="none" stroke-linecap="round"><path d="M2.8 9.8L12.5 3.1"/><path d="M2.8 9.8H15.7"/><path d="M2.8 9.8L12.5 16.1"/></g><g fill="#2C9AD6"><circle cx="2.9" cy="9.8" r="2.8"/><circle cx="12.6" cy="3.2" r="2.6"/><circle cx="15.6" cy="9.8" r="2.6"/><circle cx="12.6" cy="16.0" r="2.6"/></g></svg>
<div class="t" style="left:594.7px;top:640px;font-size:14.5px;color:#2B3445;font-weight:400;letter-spacing:0.05px;">Long Running Process</div>
<div class="box" style="left:750px;top:636px;width:24px;height:21px;border-radius:5px;background:#A9E5D5"></div>
<div class="t" style="left:750px;top:638.8px;width:24px;text-align:center;font-size:13px;color:#1B6A52;letter-spacing:0px;-webkit-text-stroke:0.1px #1B6A52">v1</div>
<div class="t" style="left:806px;top:640px;font-size:13.3px;color:#333D4E;font-weight:400;letter-spacing:0.12px;">2025<span style="color:#A3ABB8">-</span>18<span style="color:#A3ABB8">-</span>08 10:30:35</div>
<svg style="position:absolute;left:1250px;top:637px" width="18" height="18" viewBox="0 0 18 18" fill="none" stroke="#2B3445" stroke-width="1.45" stroke-linecap="round"><circle cx="8.95" cy="6.4" r="2.7"/><path d="M4.4 16.1v-1.1a3.2 3.2 0 0 1 3.2 -3.2h2.8a3.2 3.2 0 0 1 3.2 3.2v1.1"/></svg>
<div class="t" style="left:1271.7px;top:641px;font-size:12.3px;color:#333D4E;font-weight:400;letter-spacing:-0.35px;">Jane Doe</div>
<div class="box" style="left:1398.8px;top:645.8px;width:3px;height:3px;border-radius:50%;background:#2B3445"></div>
<div class="box" style="left:1403.5px;top:645.8px;width:3px;height:3px;border-radius:50%;background:#2B3445"></div>
<div class="box" style="left:1408.2px;top:645.8px;width:3px;height:3px;border-radius:50%;background:#2B3445"></div>
<div class="box" style="left:440px;top:714px;width:998px;height:1px;background:#E9EDF5"></div>
<div class="box" style="left:459px;top:682px;width:56px;height:21px;border-radius:5px;background:#D5C6F5"></div>
<div class="t" style="left:459px;top:685.5px;width:56px;text-align:center;font-size:13px;color:#2B2FCB;letter-spacing:0.05px;-webkit-text-stroke:0.2px #2B2FCB">Running</div>
<svg style="position:absolute;left:567px;top:681.5px" width="19" height="19" viewBox="0 0 19 19"><g stroke="#2C9AD6" stroke-width="1.9" fill="none" stroke-linecap="round"><path d="M2.8 9.8L12.5 3.1"/><path d="M2.8 9.8H15.7"/><path d="M2.8 9.8L12.5 16.1"/></g><g fill="#2C9AD6"><circle cx="2.9" cy="9.8" r="2.8"/><circle cx="12.6" cy="3.2" r="2.6"/><circle cx="15.6" cy="9.8" r="2.6"/><circle cx="12.6" cy="16.0" r="2.6"/></g></svg>
<div class="t" style="left:594.7px;top:685px;font-size:14.5px;color:#2B3445;font-weight:400;letter-spacing:0.05px;">Long Running Process</div>
<div class="box" style="left:750px;top:681px;width:24px;height:21px;border-radius:5px;background:#A9E5D5"></div>
<div class="t" style="left:750px;top:683.8px;width:24px;text-align:center;font-size:13px;color:#1B6A52;letter-spacing:0px;-webkit-text-stroke:0.1px #1B6A52">v1</div>
<div class="t" style="left:806px;top:685px;font-size:13.3px;color:#333D4E;font-weight:400;letter-spacing:0.12px;">2025<span style="color:#A3ABB8">-</span>18<span style="color:#A3ABB8">-</span>08 10:30:35</div>
<div class="t" style="left:964.5px;top:685px;font-size:13.3px;color:#333D4E;font-weight:400;letter-spacing:0.12px;">2025<span style="color:#A3ABB8">-</span>18<span style="color:#A3ABB8">-</span>08 10:30:53</div>
<svg style="position:absolute;left:1250px;top:682px" width="18" height="18" viewBox="0 0 18 18" fill="none" stroke="#2B3445" stroke-width="1.45" stroke-linecap="round"><circle cx="8.95" cy="6.4" r="2.7"/><path d="M4.4 16.1v-1.1a3.2 3.2 0 0 1 3.2 -3.2h2.8a3.2 3.2 0 0 1 3.2 3.2v1.1"/></svg>
<div class="t" style="left:1271.7px;top:686px;font-size:12.3px;color:#333D4E;font-weight:400;letter-spacing:-0.35px;">Jane Doe</div>
<div class="box" style="left:1398.8px;top:690.8px;width:3px;height:3px;border-radius:50%;background:#2B3445"></div>
<div class="box" style="left:1403.5px;top:690.8px;width:3px;height:3px;border-radius:50%;background:#2B3445"></div>
<div class="box" style="left:1408.2px;top:690.8px;width:3px;height:3px;border-radius:50%;background:#2B3445"></div>
<div class="box" style="left:440px;top:759px;width:998px;height:1px;background:#E9EDF5"></div>
<div class="box" style="left:459px;top:727px;width:76px;height:21px;border-radius:5px;background:#A9E5D5"></div>
<div class="t" style="left:459px;top:730.5px;width:76px;text-align:center;font-size:13px;color:#1B6A52;letter-spacing:0.05px;-webkit-text-stroke:0.2px #1B6A52">Completed</div>
<svg style="position:absolute;left:567px;top:726.5px" width="19" height="19" viewBox="0 0 19 19"><g stroke="#2C9AD6" stroke-width="1.9" fill="none" stroke-linecap="round"><path d="M2.8 9.8L12.5 3.1"/><path d="M2.8 9.8H15.7"/><path d="M2.8 9.8L12.5 16.1"/></g><g fill="#2C9AD6"><circle cx="2.9" cy="9.8" r="2.8"/><circle cx="12.6" cy="3.2" r="2.6"/><circle cx="15.6" cy="9.8" r="2.6"/><circle cx="12.6" cy="16.0" r="2.6"/></g></svg>
<div class="t" style="left:594.7px;top:730px;font-size:14.5px;color:#2B3445;font-weight:400;letter-spacing:0.05px;">Long Running Process</div>
<div class="box" style="left:750px;top:726px;width:24px;height:21px;border-radius:5px;background:#A9E5D5"></div>
<div class="t" style="left:750px;top:728.8px;width:24px;text-align:center;font-size:13px;color:#1B6A52;letter-spacing:0px;-webkit-text-stroke:0.1px #1B6A52">v1</div>
<div class="t" style="left:806px;top:730px;font-size:13.3px;color:#333D4E;font-weight:400;letter-spacing:0.12px;">2025<span style="color:#A3ABB8">-</span>18<span style="color:#A3ABB8">-</span>08 10:30:35</div>
<div class="t" style="left:964.5px;top:730px;font-size:13.3px;color:#333D4E;font-weight:400;letter-spacing:0.12px;">2025<span style="color:#A3ABB8">-</span>18<span style="color:#A3ABB8">-</span>08 10:30:45</div>
<div class="t" style="left:1129.3px;top:730px;font-size:13.3px;color:#333D4E;font-weight:400;letter-spacing:-0.45px;">8s 35ms</div>
<svg style="position:absolute;left:1250px;top:727px" width="18" height="18" viewBox="0 0 18 18" fill="none" stroke="#2B3445" stroke-width="1.45" stroke-linecap="round"><circle cx="8.95" cy="6.4" r="2.7"/><path d="M4.4 16.1v-1.1a3.2 3.2 0 0 1 3.2 -3.2h2.8a3.2 3.2 0 0 1 3.2 3.2v1.1"/></svg>
<div class="t" style="left:1271.7px;top:731px;font-size:12.3px;color:#333D4E;font-weight:400;letter-spacing:-0.35px;">Jane Doe</div>
<div class="box" style="left:1398.8px;top:735.8px;width:3px;height:3px;border-radius:50%;background:#2B3445"></div>
<div class="box" style="left:1403.5px;top:735.8px;width:3px;height:3px;border-radius:50%;background:#2B3445"></div>
<div class="box" style="left:1408.2px;top:735.8px;width:3px;height:3px;border-radius:50%;background:#2B3445"></div>
<div class="box" style="left:440px;top:804px;width:998px;height:1px;background:#E9EDF5"></div>
<div class="box" style="left:459px;top:772px;width:76px;height:21px;border-radius:5px;background:#A9E5D5"></div>
<div class="t" style="left:459px;top:775.5px;width:76px;text-align:center;font-size:13px;color:#1B6A52;letter-spacing:0.05px;-webkit-text-stroke:0.2px #1B6A52">Completed</div>
<svg style="position:absolute;left:567px;top:771.5px" width="19" height="19" viewBox="0 0 19 19"><g stroke="#2C9AD6" stroke-width="1.9" fill="none" stroke-linecap="round"><path d="M2.8 9.8L12.5 3.1"/><path d="M2.8 9.8H15.7"/><path d="M2.8 9.8L12.5 16.1"/></g><g fill="#2C9AD6"><circle cx="2.9" cy="9.8" r="2.8"/><circle cx="12.6" cy="3.2" r="2.6"/><circle cx="15.6" cy="9.8" r="2.6"/><circle cx="12.6" cy="16.0" r="2.6"/></g></svg>
<div class="t" style="left:594.7px;top:775px;font-size:14.5px;color:#2B3445;font-weight:400;letter-spacing:0.05px;">Long Running Process</div>
<div class="box" style="left:750px;top:771px;width:24px;height:21px;border-radius:5px;background:#A9E5D5"></div>
<div class="t" style="left:750px;top:773.8px;width:24px;text-align:center;font-size:13px;color:#1B6A52;letter-spacing:0px;-webkit-text-stroke:0.1px #1B6A52">v1</div>
<div class="t" style="left:806px;top:775px;font-size:13.3px;color:#333D4E;font-weight:400;letter-spacing:0.12px;">2025<span style="color:#A3ABB8">-</span>18<span style="color:#A3ABB8">-</span>08 10:30:35</div>
<div class="t" style="left:964.5px;top:775px;font-size:13.3px;color:#333D4E;font-weight:400;letter-spacing:0.12px;">2025<span style="color:#A3ABB8">-</span>18<span style="color:#A3ABB8">-</span>08 10:30:37</div>
<div class="t" style="left:1129.3px;top:775px;font-size:13.3px;color:#333D4E;font-weight:400;letter-spacing:-0.45px;">8s 32ms</div>
<svg style="position:absolute;left:1250px;top:772px" width="18" height="18" viewBox="0 0 18 18" fill="none" stroke="#2B3445" stroke-width="1.45" stroke-linecap="round"><circle cx="8.95" cy="6.4" r="2.7"/><path d="M4.4 16.1v-1.1a3.2 3.2 0 0 1 3.2 -3.2h2.8a3.2 3.2 0 0 1 3.2 3.2v1.1"/></svg>
<div class="t" style="left:1271.7px;top:776px;font-size:12.3px;color:#333D4E;font-weight:400;letter-spacing:-0.35px;">Jane Doe</div>
<div class="box" style="left:1398.8px;top:780.8px;width:3px;height:3px;border-radius:50%;background:#2B3445"></div>
<div class="box" style="left:1403.5px;top:780.8px;width:3px;height:3px;border-radius:50%;background:#2B3445"></div>
<div class="box" style="left:1408.2px;top:780.8px;width:3px;height:3px;border-radius:50%;background:#2B3445"></div>
<div class="box" style="left:440px;top:849px;width:998px;height:1px;background:#E9EDF5"></div>
<div class="box" style="left:459px;top:817px;width:76px;height:21px;border-radius:5px;background:#A9E5D5"></div>
<div class="t" style="left:459px;top:820.5px;width:76px;text-align:center;font-size:13px;color:#1B6A52;letter-spacing:0.05px;-webkit-text-stroke:0.2px #1B6A52">Completed</div>
<svg style="position:absolute;left:567px;top:816.5px" width="19" height="19" viewBox="0 0 19 19"><g stroke="#2C9AD6" stroke-width="1.9" fill="none" stroke-linecap="round"><path d="M2.8 9.8L12.5 3.1"/><path d="M2.8 9.8H15.7"/><path d="M2.8 9.8L12.5 16.1"/></g><g fill="#2C9AD6"><circle cx="2.9" cy="9.8" r="2.8"/><circle cx="12.6" cy="3.2" r="2.6"/><circle cx="15.6" cy="9.8" r="2.6"/><circle cx="12.6" cy="16.0" r="2.6"/></g></svg>
<div class="t" style="left:594.7px;top:820px;font-size:14.5px;color:#2B3445;font-weight:400;letter-spacing:0.05px;">Long Running Process</div>
<div class="box" style="left:750px;top:816px;width:24px;height:21px;border-radius:5px;background:#A9E5D5"></div>
<div class="t" style="left:750px;top:818.8px;width:24px;text-align:center;font-size:13px;color:#1B6A52;letter-spacing:0px;-webkit-text-stroke:0.1px #1B6A52">v1</div>
<div class="t" style="left:806px;top:820px;font-size:13.3px;color:#333D4E;font-weight:400;letter-spacing:0.12px;">2025<span style="color:#A3ABB8">-</span>18<span style="color:#A3ABB8">-</span>08 10:30:28</div>
<div class="t" style="left:964.5px;top:820px;font-size:13.3px;color:#333D4E;font-weight:400;letter-spacing:0.12px;">2025<span style="color:#A3ABB8">-</span>18<span style="color:#A3ABB8">-</span>08 10:30:28</div>
<div class="t" style="left:1129.3px;top:820px;font-size:13.3px;color:#333D4E;font-weight:400;letter-spacing:-0.45px;">8s 93ms</div>
<svg style="position:absolute;left:1250px;top:817px" width="18" height="18" viewBox="0 0 18 18" fill="none" stroke="#2B3445" stroke-width="1.45" stroke-linecap="round"><circle cx="8.95" cy="6.4" r="2.7"/><path d="M4.4 16.1v-1.1a3.2 3.2 0 0 1 3.2 -3.2h2.8a3.2 3.2 0 0 1 3.2 3.2v1.1"/></svg>
<div class="t" style="left:1271.7px;top:821px;font-size:12.3px;color:#333D4E;font-weight:400;letter-spacing:-0.35px;">Jane Doe</div>
<div class="box" style="left:1398.8px;top:825.8px;width:3px;height:3px;border-radius:50%;background:#2B3445"></div>
<div class="box" style="left:1403.5px;top:825.8px;width:3px;height:3px;border-radius:50%;background:#2B3445"></div>
<div class="box" style="left:1408.2px;top:825.8px;width:3px;height:3px;border-radius:50%;background:#2B3445"></div>
<div class="box" style="left:440px;top:894px;width:998px;height:1px;background:#E9EDF5"></div>
<div class="box" style="left:459px;top:862px;width:76px;height:21px;border-radius:5px;background:#A9E5D5"></div>
<div class="t" style="left:459px;top:865.5px;width:76px;text-align:center;font-size:13px;color:#1B6A52;letter-spacing:0.05px;-webkit-text-stroke:0.2px #1B6A52">Completed</div>
<svg style="position:absolute;left:567px;top:861.5px" width="19" height="19" viewBox="0 0 19 19"><g stroke="#2C9AD6" stroke-width="1.9" fill="none" stroke-linecap="round"><path d="M2.8 9.8L12.5 3.1"/><path d="M2.8 9.8H15.7"/><path d="M2.8 9.8L12.5 16.1"/></g><g fill="#2C9AD6"><circle cx="2.9" cy="9.8" r="2.8"/><circle cx="12.6" cy="3.2" r="2.6"/><circle cx="15.6" cy="9.8" r="2.6"/><circle cx="12.6" cy="16.0" r="2.6"/></g></svg>
<div class="t" style="left:594.7px;top:865px;font-size:14.5px;color:#2B3445;font-weight:400;letter-spacing:0.05px;">Long Running Process</div>
<div class="box" style="left:750px;top:861px;width:24px;height:21px;border-radius:5px;background:#A9E5D5"></div>
<div class="t" style="left:750px;top:863.8px;width:24px;text-align:center;font-size:13px;color:#1B6A52;letter-spacing:0px;-webkit-text-stroke:0.1px #1B6A52">v1</div>
<div class="t" style="left:806px;top:865px;font-size:13.3px;color:#333D4E;font-weight:400;letter-spacing:0.12px;">2025<span style="color:#A3ABB8">-</span>14<span style="color:#A3ABB8">-</span>08 10:41:52</div>
<div class="t" style="left:964.5px;top:865px;font-size:13.3px;color:#333D4E;font-weight:400;letter-spacing:0.12px;">2025<span style="color:#A3ABB8">-</span>14<span style="color:#A3ABB8">-</span>08 10:41:54</div>
<div class="t" style="left:1129.3px;top:865px;font-size:13.3px;color:#333D4E;font-weight:400;letter-spacing:-0.45px;">8s 29ms</div>
<svg style="position:absolute;left:1250px;top:862px" width="18" height="18" viewBox="0 0 18 18" fill="none" stroke="#2B3445" stroke-width="1.45" stroke-linecap="round"><circle cx="8.95" cy="6.4" r="2.7"/><path d="M4.4 16.1v-1.1a3.2 3.2 0 0 1 3.2 -3.2h2.8a3.2 3.2 0 0 1 3.2 3.2v1.1"/></svg>
<div class="t" style="left:1271.7px;top:866px;font-size:12.3px;color:#333D4E;font-weight:400;letter-spacing:-0.35px;">Jane Doe</div>
<div class="box" style="left:1398.8px;top:870.8px;width:3px;height:3px;border-radius:50%;background:#2B3445"></div>
<div class="box" style="left:1403.5px;top:870.8px;width:3px;height:3px;border-radius:50%;background:#2B3445"></div>
<div class="box" style="left:1408.2px;top:870.8px;width:3px;height:3px;border-radius:50%;background:#2B3445"></div>
<div class="box" style="left:440px;top:939px;width:998px;height:1px;background:#E9EDF5"></div>
<div class="box" style="left:459px;top:907px;width:76px;height:21px;border-radius:5px;background:#A9E5D5"></div>
<div class="t" style="left:459px;top:910.5px;width:76px;text-align:center;font-size:13px;color:#1B6A52;letter-spacing:0.05px;-webkit-text-stroke:0.2px #1B6A52">Completed</div>
<svg style="position:absolute;left:567px;top:906.5px" width="19" height="19" viewBox="0 0 19 19"><g stroke="#2C9AD6" stroke-width="1.9" fill="none" stroke-linecap="round"><path d="M2.8 9.8L12.5 3.1"/><path d="M2.8 9.8H15.7"/><path d="M2.8 9.8L12.5 16.1"/></g><g fill="#2C9AD6"><circle cx="2.9" cy="9.8" r="2.8"/><circle cx="12.6" cy="3.2" r="2.6"/><circle cx="15.6" cy="9.8" r="2.6"/><circle cx="12.6" cy="16.0" r="2.6"/></g></svg>
<div class="t" style="left:594.7px;top:910px;font-size:14.5px;color:#2B3445;font-weight:400;letter-spacing:0.05px;">Long Running Process</div>
<div class="box" style="left:750px;top:906px;width:24px;height:21px;border-radius:5px;background:#A9E5D5"></div>
<div class="t" style="left:750px;top:908.8px;width:24px;text-align:center;font-size:13px;color:#1B6A52;letter-spacing:0px;-webkit-text-stroke:0.1px #1B6A52">v1</div>
<svg style="position:absolute;left:1250px;top:907px" width="18" height="18" viewBox="0 0 18 18" fill="none" stroke="#2B3445" stroke-width="1.45" stroke-linecap="round"><circle cx="8.95" cy="6.4" r="2.7"/><path d="M4.4 16.1v-1.1a3.2 3.2 0 0 1 3.2 -3.2h2.8a3.2 3.2 0 0 1 3.2 3.2v1.1"/></svg>
<div class="t" style="left:1271.7px;top:911px;font-size:12.3px;color:#333D4E;font-weight:400;letter-spacing:-0.35px;">Jane Doe</div>
<div class="box" style="left:1398.8px;top:915.8px;width:3px;height:3px;border-radius:50%;background:#2B3445"></div>
<div class="box" style="left:1403.5px;top:915.8px;width:3px;height:3px;border-radius:50%;background:#2B3445"></div>
<div class="box" style="left:1408.2px;top:915.8px;width:3px;height:3px;border-radius:50%;background:#2B3445"></div>
</body></html>
